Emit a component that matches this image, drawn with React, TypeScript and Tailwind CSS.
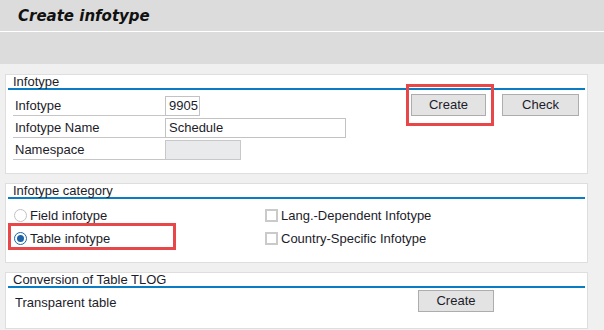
import React from 'react';

const font = { fontFamily: '"Liberation Sans", Arial, sans-serif' };

const Panel: React.FC<{ title: string; className?: string; children: React.ReactNode }> = ({ title, className, children }) => (
    <div className={`border border-[#dedede] bg-white px-[2px] ${className ?? ''}`}>
        <div className="h-[15px] border-b-2 border-[#0a7cc4] pl-[5px] text-[13px] leading-[14px] text-[#1c1c2a]">
            {title}
        </div>
        {children}
    </div>
);

const SapButton: React.FC<{ label: string; className?: string }> = ({ label, className }) => (
    <button
        className={`h-[22px] border border-[#adadad] bg-[#e3e3e3] text-[13px] leading-[20px] text-[#1c1c2a] ${className ?? ''}`}
    >
        {label}
    </button>
);

const FieldRow: React.FC<{ label: string; children: React.ReactNode }> = ({ label, children }) => (
    <div className="flex h-[22px] items-end">
        <div className="h-[20px] w-[152px] border-b border-[#c6c6c6] pl-[2px] text-[13px] leading-[19px] text-[#1c1c2a]">
            {label}
        </div>
        {children}
    </div>
);

const Radio: React.FC<{ checked?: boolean; label: string }> = ({ checked, label }) => (
    <div className="flex h-[23px] items-center gap-[3px]">
        <span
            className={`flex h-[13px] w-[13px] items-center justify-center rounded-full border ${
                checked ? 'border-[#1d63a8]' : 'border-[#c2c2c2]'
            }`}
        >
            {checked && <span className="h-[7px] w-[7px] rounded-full bg-[#1d63a8]" />}
        </span>
        <span className="text-[13px] text-[#1c1c2a]">{label}</span>
    </div>
);

const Check: React.FC<{ label: string }> = ({ label }) => (
    <div className="flex h-[23px] items-center gap-[3px]">
        <span className="h-[13px] w-[13px] border-2 border-[#cacaca]" />
        <span className="text-[13px] text-[#1c1c2a]">{label}</span>
    </div>
);

const App: React.FC = () => {
    return (
        <div className="relative h-[330px] w-[604px] overflow-hidden bg-[#f0f0f0]" style={font}>
            <div className="h-[31px] bg-[#dcdcdc] pl-[18px] pt-[4px]">
                <span
                    className="text-[15px] font-bold italic text-[#111]"
                    style={{ fontFamily: '"DejaVu Sans", Verdana, sans-serif' }}
                >
                    Create infotype
                </span>
            </div>
            <div className="h-[33px] border-t border-white bg-[#dcdcdc]" />

            <div className="flex w-[588px] flex-col pl-[5px] pt-[10px]">
                <Panel title="Infotype" className="h-[100px]">
                    <div className="flex pt-[4px]">
                        <div className="flex flex-col pl-[5px]">
                            <FieldRow label="Infotype">
                                <div className="h-[20px] w-[35px] border border-[#c2c2c2] pl-[3px] text-[13px] leading-[18px] text-[#1c1c2a]">
                                    9905
                                </div>
                            </FieldRow>
                            <FieldRow label="Infotype Name">
                                <div className="h-[20px] w-[181px] border border-[#c2c2c2] pl-[3px] text-[13px] leading-[18px] text-[#1c1c2a]">
                                    Schedule
                                </div>
                            </FieldRow>
                            <FieldRow label="Namespace">
                                <div className="h-[20px] w-[76px] border border-[#c8c8c8] bg-[#e8eaec]" />
                            </FieldRow>
                        </div>
                        <div className="ml-[65px] flex gap-[16px]">
                            <SapButton label="Create" className="w-[75px]" />
                            <SapButton label="Check" className="w-[77px]" />
                        </div>
                    </div>
                </Panel>

                <Panel title="Infotype category" className="mt-[9px] h-[80px]">
                    <div className="flex pl-[6px] pt-[5px]">
                        <div className="flex w-[251px] flex-col">
                            <Radio label="Field infotype" />
                            <Radio checked label="Table infotype" />
                        </div>
                        <div className="flex flex-col">
                            <Check label="Lang.-Dependent Infotype" />
                            <Check label="Country-Specific Infotype" />
                        </div>
                    </div>
                </Panel>

                <Panel title="Conversion of Table TLOG" className="mt-[9px] h-[57px]">
                    <div className="flex items-start pt-[2px]">
                        <div className="w-[410px] pl-[7px] pt-[3px] text-[13px] text-[#1c1c2a]">Transparent table</div>
                        <SapButton label="Create" className="w-[76px]" />
                    </div>
                </Panel>
            </div>

            {/* annotation boxes */}
            <div className="absolute left-[406px] top-[84px] h-[42px] w-[88px] border-[3px] border-[#e8474a]" />
            <div className="absolute left-[8px] top-[223px] h-[27px] w-[168px] border-[3px] border-[#e8474a]" />
        </div>
    );
};

export default App;
